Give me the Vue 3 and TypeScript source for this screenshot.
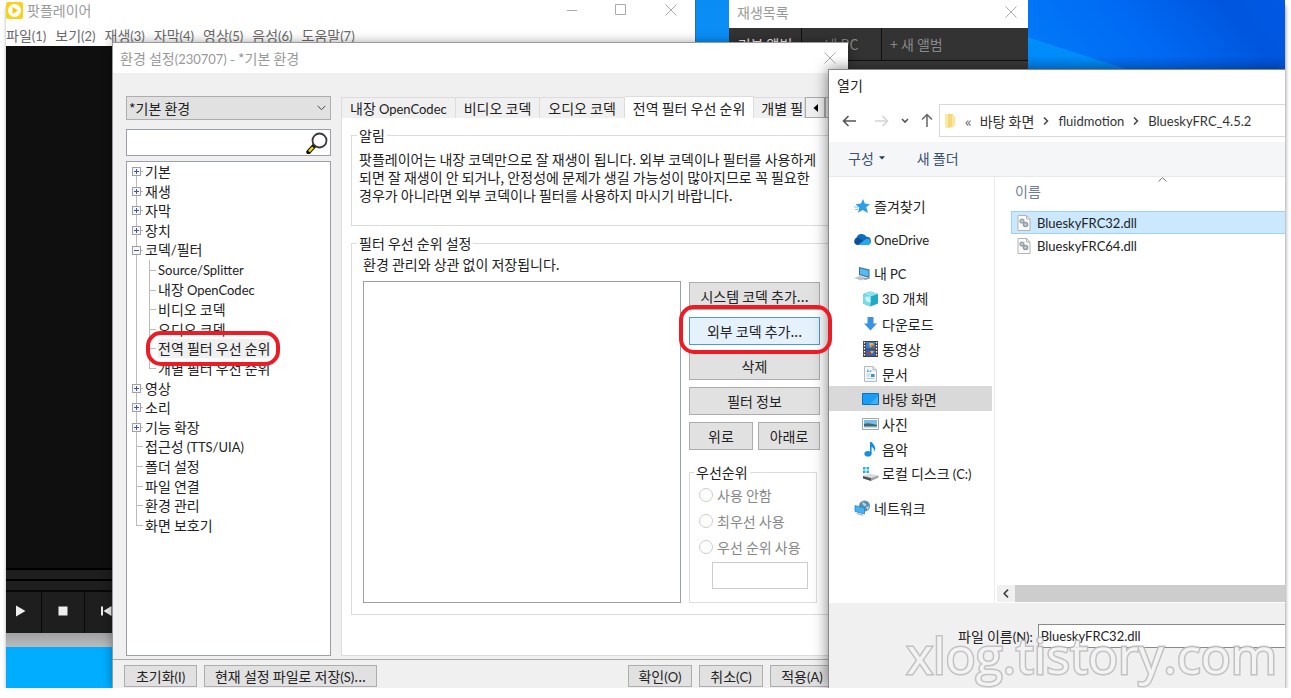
<script setup lang="ts">
import { h, ref } from 'vue'

interface TreeRow {
  label: string
  level: 1 | 2
  toggle?: 'plus' | 'minus'
  first?: boolean
  last?: boolean
  selected?: boolean
}

interface Place {
  label: string
  icon: string
  nested?: boolean
  gap?: boolean
  active?: boolean
}

// Sets Latin runs in their own face beside the Korean text.
const Mixed = (props: { t: string }) =>
  h(
    'span',
    props.t
      .split(/([A-Za-z0-9()/_.:]+)/)
      .filter(Boolean)
      .map((part) => (/^[A-Za-z0-9()/_.:]/.test(part) ? h('span', { class: 'latin' }, part) : part)),
  )
Mixed.props = ['t']

const menus = ['파일(1)', '보기(2)', '재생(3)', '자막(4)', '영상(5)', '음성(6)', '도움말(7)']

const tree: TreeRow[] = [
  { label: '기본', level: 1, toggle: 'plus', first: true },
  { label: '재생', level: 1, toggle: 'plus' },
  { label: '자막', level: 1, toggle: 'plus' },
  { label: '장치', level: 1, toggle: 'plus' },
  { label: '코덱/필터', level: 1, toggle: 'minus' },
  { label: 'Source/Splitter', level: 2 },
  { label: '내장 OpenCodec', level: 2 },
  { label: '비디오 코덱', level: 2 },
  { label: '오디오 코덱', level: 2 },
  { label: '전역 필터 우선 순위', level: 2, selected: true },
  { label: '개별 필터 우선 순위', level: 2, last: true },
  { label: '영상', level: 1, toggle: 'plus' },
  { label: '소리', level: 1, toggle: 'plus' },
  { label: '기능 확장', level: 1, toggle: 'plus' },
  { label: '접근성 (TTS/UIA)', level: 1 },
  { label: '폴더 설정', level: 1 },
  { label: '파일 연결', level: 1 },
  { label: '환경 관리', level: 1 },
  { label: '화면 보호기', level: 1, last: true },
]

const tabs = ['내장 OpenCodec', '비디오 코덱', '오디오 코덱', '전역 필터 우선 순위', '개별 필']
const activeTab = ref(3)

const priorities = ['사용 안함', '최우선 사용', '우선 순위 사용']

const places: Place[] = [
  { label: '즐겨찾기', icon: 'star' },
  { label: 'OneDrive', icon: 'cloud', gap: true },
  { label: '내 PC', icon: 'pc', gap: true },
  { label: '3D 개체', icon: 'cube', nested: true },
  { label: '다운로드', icon: 'down', nested: true },
  { label: '동영상', icon: 'film', nested: true },
  { label: '문서', icon: 'doc', nested: true },
  { label: '바탕 화면', icon: 'desk', nested: true, active: true },
  { label: '사진', icon: 'photo', nested: true },
  { label: '음악', icon: 'note', nested: true },
  { label: '로컬 디스크 (C:)', icon: 'disk', nested: true },
  { label: '네트워크', icon: 'net', gap: true },
]

const files = ['BlueskyFRC32.dll', 'BlueskyFRC64.dll']
const selectedFile = ref(0)
const fileName = ref('BlueskyFRC32.dll')
const profile = ref('*기본 환경')
const query = ref('')
</script>

<template>
  <main class="desktop">
    <section class="win player">
      <header class="player-title">
        <svg class="logo" width="17" height="17" viewBox="0 0 17 17">
          <rect width="17" height="17" rx="2" fill="#f8d31c" />
          <circle cx="8.5" cy="8.5" r="6.500" fill="#fff" />
          <path d="M6.500 5 12 8.500 6.500 12z" fill="#f3c812" />
        </svg>
        <span class="grow">팟플레이어</span>
        <button class="cap" aria-label="최소화"><svg width="12" height="12" viewBox="0 0 12 12"><path d="M1 6.5H11" /></svg></button>
        <button class="cap" aria-label="최대화"><svg width="12" height="12" viewBox="0 0 12 12"><path d="M.5 .5H10.500V10.500H.5z" /></svg></button>
        <button class="cap" aria-label="닫기"><svg width="12" height="12" viewBox="0 0 12 12"><path d="M.5 .5 11.500 11.500M11.500 .5 .5 11.500" /></svg></button>
      </header>
      <nav class="menu">
        <button v-for="m in menus" :key="m"><Mixed :t="m" /></button>
      </nav>
      <div class="video"></div>
      <div class="seek"></div>
      <div class="seek"></div>
      <div class="controls">
        <button aria-label="재생"><svg width="12" height="12" viewBox="0 0 12 12"><path d="M1 .5 10.500 6 1 11.500z" fill="#eee" /></svg></button>
        <button aria-label="정지"><svg width="12" height="12" viewBox="0 0 12 12"><rect x="1.500" y="1.500" width="9" height="9" fill="#eee" /></svg></button>
        <button aria-label="이전"><svg width="12" height="12" viewBox="0 0 12 12"><path d="M1 1.500H3V10.500H1zM11.500 1V11L3.500 6z" fill="#eee" /></svg></button>
      </div>
      <div class="base"></div>
    </section>

    <section class="win playlist">
      <header class="list-title">
        <span class="grow">재생목록</span>
        <button class="cap" aria-label="닫기"><svg width="12" height="12" viewBox="0 0 12 12"><path d="M.5 .5 11.500 11.500M11.500 .5 .5 11.500" /></svg></button>
      </header>
      <div class="albums">
        <button class="on">기본 앨범</button>
        <button>내 PC</button>
        <button class="new">+ 새 앨범</button>
      </div>
    </section>

    <section class="win settings">
      <header class="set-title">
        <span class="grow"><Mixed t="환경 설정(230707) - *기본 환경" /></span>
        <button class="cap" aria-label="닫기"><svg width="12" height="12" viewBox="0 0 12 12"><path d="M.5 .5 11.500 11.500M11.500 .5 .5 11.500" /></svg></button>
      </header>
      <div class="set-body">
        <div class="side">
          <div class="combo">
            <select v-model="profile" aria-label="환경">
              <option>*기본 환경</option>
            </select>
            <svg width="9" height="6" viewBox="0 0 9 6"><path d="M.7.9 4.500 4.700 8.300.9" fill="none" stroke="#444" /></svg>
          </div>
          <div class="search">
            <input v-model="query" type="text" aria-label="검색" />
            <svg width="22" height="22" viewBox="0 0 22 22">
              <path d="M8 14 2.500 20" stroke="#111" stroke-width="4.500" stroke-linecap="round" />
              <path d="M7 15.200 3 19.500" stroke="#f3e000" stroke-width="2.400" />
              <circle cx="13.500" cy="8.500" r="7" fill="#fff" stroke="#3a3a3a" stroke-width="1.800" />
            </svg>
          </div>
          <div class="tree">
            <ul>
              <li v-for="row in tree" :key="row.label">
                <span v-if="row.level === 2" class="stem through"></span>
                <span class="stem branch" :class="{ first: row.first, last: row.last }">
                  <button v-if="row.toggle" class="toggle" :aria-label="row.label">
                    <svg width="9" height="9" viewBox="0 0 9 9">
                      <rect x=".5" y=".5" width="8" height="8" fill="#f6f6f6" stroke="#a0a0a0" />
                      <path d="M2 4.500H7" stroke="#3c5a9c" />
                      <path v-if="row.toggle === 'plus'" d="M4.500 2V7" stroke="#3c5a9c" />
                    </svg>
                  </button>
                </span>
                <span class="leaf" :class="{ sel: row.selected }"><Mixed :t="row.label" /></span>
              </li>
            </ul>
          </div>
        </div>

        <div class="pane">
          <div class="tabs">
            <button v-for="(t, i) in tabs" :key="t" :class="{ on: i === activeTab }" @click="activeTab = i"><Mixed :t="t" /></button>
            <button class="arrow" aria-label="이전 탭"><svg width="5" height="8" viewBox="0 0 5 8"><path d="M5 0V8L.5 4z" fill="#000" /></svg></button>
            <button class="arrow" aria-label="다음 탭"><svg width="5" height="8" viewBox="0 0 5 8"><path d="M0 0V8L4.500 4z" fill="#000" /></svg></button>
          </div>
          <div class="page">
            <fieldset class="notice">
              <legend>알림</legend>
              <p>팟플레이어는 내장 코덱만으로 잘 재생이 됩니다. 외부 코덱이나 필터를 사용하게<br />되면 잘 재생이 안 되거나, 안정성에 문제가 생길 가능성이 많아지므로 꼭 필요한<br />경우가 아니라면 외부 코덱이나 필터를 사용하지 마시기 바랍니다.</p>
            </fieldset>
            <fieldset class="order">
              <legend>필터 우선 순위 설정</legend>
              <div class="order-in">
                <p>환경 관리와 상관 없이 저장됩니다.</p>
                <div class="cols">
                  <div class="listbox"></div>
                  <div class="acts">
                    <button class="btn">시스템 코덱 추가...</button>
                    <button class="btn hot">외부 코덱 추가...</button>
                    <button class="btn">삭제</button>
                    <button class="btn">필터 정보</button>
                    <div class="pair">
                      <button class="btn">위로</button>
                      <button class="btn">아래로</button>
                    </div>
                    <fieldset class="prio">
                      <legend>우선순위</legend>
                      <label v-for="p in priorities" :key="p"><input type="radio" name="prio" disabled />{{ p }}</label>
                      <input class="num" type="text" aria-label="우선 순위" disabled />
                    </fieldset>
                  </div>
                </div>
              </div>
            </fieldset>
          </div>
        </div>
      </div>
      <footer class="set-foot">
        <button class="btn reset"><Mixed t="초기화(I)" /></button>
        <button class="btn save">현재 설정 파일로 저장<span class="latin">(S)</span>...</button>
        <span class="grow"></span>
        <button class="btn"><Mixed t="확인(O)" /></button>
        <button class="btn"><Mixed t="취소(C)" /></button>
        <button class="btn"><Mixed t="적용(A)" /></button>
      </footer>
    </section>

    <section class="win open">
      <header class="open-title">열기</header>
      <div class="nav">
        <button aria-label="뒤로"><svg width="15" height="12" viewBox="0 0 15 12"><path d="M14 6H1.500M6.500 1 1.500 6 6.500 11" fill="none" stroke="#555" stroke-width="1.600" /></svg></button>
        <button aria-label="앞으로"><svg width="15" height="12" viewBox="0 0 15 12"><path d="M1 6H13.500M8.500 1 13.500 6 8.500 11" fill="none" stroke="#d4d4d4" stroke-width="1.600" /></svg></button>
        <button aria-label="최근 위치"><svg width="8" height="6" viewBox="0 0 8 6"><path d="M1 1 4 4 7 1" fill="none" stroke="#555" stroke-width="1.600" /></svg></button>
        <button aria-label="위로"><svg width="12" height="15" viewBox="0 0 12 15"><path d="M6 14V1.500M1 6.500 6 1.500 11 6.500" fill="none" stroke="#666" stroke-width="1.500" /></svg></button>
        <div class="address">
          <svg width="11" height="16" viewBox="0 0 11 16"><path d="M0 1H8V14L3 15 0 14z" fill="#f7d777" /><path d="M7 3H10V13H7z" fill="#fbe6a2" /><path d="M0 1H3V15L0 14z" fill="#fce9a9" /></svg>
          <span class="more">«</span>
          <a href="#">바탕 화면</a>
          <svg class="sep" width="6" height="8" viewBox="0 0 6 8"><path d="M1 .5 4.500 4 1 7.500" fill="none" stroke="#444" stroke-width="1.500" /></svg>
          <a href="#"><Mixed t="fluidmotion" /></a>
          <svg class="sep" width="6" height="8" viewBox="0 0 6 8"><path d="M1 .5 4.500 4 1 7.500" fill="none" stroke="#444" stroke-width="1.500" /></svg>
          <a href="#"><Mixed t="BlueskyFRC_4.5.2" /></a>
        </div>
      </div>
      <div class="tools">
        <button>구성<svg width="6" height="4" viewBox="0 0 6 4"><path d="M0 .3H6L3 3.500z" fill="#1e395b" /></svg></button>
        <button>새 폴더</button>
      </div>
      <div class="open-body">
        <ul class="places">
          <li v-for="p in places" :key="p.label" :class="{ nested: p.nested, gap: p.gap, active: p.active }">
            <svg width="17" height="16" viewBox="0 0 17 16">
              <template v-if="p.icon === 'star'">
                <path d="M9 1 11 5.700 16 5.900 12.300 9.200 14 15 8.700 12 4 14.800 5.200 9.500 1.500 6.200 7 5.600z" fill="#2c9fe8" />
                <path d="M0 9H4M1 11.500H4" stroke="#7cc4f2" />
              </template>
              <template v-else-if="p.icon === 'cloud'">
                <path d="M4 13A4 4 0 0 1 2.500 5.800 5.500 5.500 0 0 1 12.500 4.800 4.200 4.200 0 0 1 14 13z" fill="#0f6cbd" />
                <path d="M4 13C7 10.500 10 8 13.500 6.500 18 7.500 17.500 13 13.500 13z" fill="#28a8ea" />
                <path d="M2 6C4.500 5 6 6 9 9L3.500 13C-.5 12-.5 8 2 6z" fill="#0b4f9f" />
              </template>
              <template v-else-if="p.icon === 'pc'">
                <path d="M5 1 15.500 3.500V12L5 9z" fill="#3e6c93" />
                <path d="M6 2.300 14.500 4.400V10.500L6 8.200z" fill="#54bbf5" />
                <path d="M0 12 6 10 13 12 7 14.500z" fill="#b9c4cc" />
                <path d="M9 12.500 15 11.500 16 12.500 11 14z" fill="#8c9aa5" />
              </template>
              <template v-else-if="p.icon === 'cube'">
                <path d="M1 3 8.500 .5 16 3V12.500L8.500 15.500 1 12.500z" fill="#1fa9c4" />
                <path d="M1 3 8.500 .5 16 3 8.500 5.500z" fill="#8fe3ef" />
                <path d="M1 3 8.500 5.500V15.500L1 12.500z" fill="#7dd8e6" />
                <path d="M3 6 8.500 5.500V12L4 10z" fill="#c7f2f7" />
              </template>
              <path v-else-if="p.icon === 'down'" d="M5.500 1H11.500V7.500H15L8.500 14.500 2 7.500H5.500z" fill="#3a92e4" />
              <template v-else-if="p.icon === 'film'">
                <path d="M1 0H16V16H1z" fill="#3f4347" />
                <path d="M4 1H13V7.500H4z" fill="#3b7ddd" />
                <path d="M4 8.500H13V15H4z" fill="#2c62bd" />
                <path d="M7 2H11L12 6H8zM8 10H12L10 13z" fill="#e9bd24" />
                <path d="M9 4 13 5 10 7zM4 12 8 10 9 14z" fill="#b84432" />
                <path d="M2.500 1V15M14.500 1V15" stroke="#fff" stroke-width="1.300" stroke-dasharray="1.500 1.500" />
              </template>
              <template v-else-if="p.icon === 'doc'">
                <path d="M2.500 .5H11L14.500 4V15.500H2.500z" fill="#f4f6f8" stroke="#b3bac0" />
                <path d="M11 .5V4H14.500" fill="none" stroke="#b3bac0" />
                <path d="M4.500 6 6 2.500 7 6 9 3.500 9.500 6z" fill="#5fb4e6" />
                <path d="M4.500 8H8M4.500 10H8M4.500 12.500H12.500" stroke="#a9cfe6" />
                <path d="M9 8H12.500V11H9z" fill="#3b8fc9" />
              </template>
              <template v-else-if="p.icon === 'desk'">
                <path d="M.5 2.500H16.500V13.500H.5z" fill="#1c9cf5" stroke="#0874bf" />
                <path d="M8 13 16 5V13z" fill="#44b0fa" />
              </template>
              <template v-else-if="p.icon === 'photo'">
                <path d="M.5 2.500H16.500V13.500H.5z" fill="#fff" stroke="#9fa8ae" />
                <path d="M2 4H15V9H2z" fill="#79bdf0" />
                <path d="M2 8C6 6.500 9 8 15 9V12H2z" fill="#3f6b62" />
                <path d="M2 10.500H15V12H2z" fill="#c4dcea" />
              </template>
              <template v-else-if="p.icon === 'note'">
                <ellipse cx="6" cy="12.700" rx="3.600" ry="2.800" fill="#168ee5" />
                <path d="M8 1V12.500H9.600V6C12 7 12.500 8.500 11.500 11 15 8 13 5 9.600 1z" fill="#168ee5" />
              </template>
              <template v-else-if="p.icon === 'disk'">
                <path d="M1 1H3.500V3.500H1zM4.500 1H7V3.500H4.500zM1 4.500H3.500V7H1zM4.500 4.500H7V7H4.500z" fill="#20b3e8" />
                <path d="M1 10 7 7.500 16.500 9.500 9 12z" fill="#d9dbdc" />
                <path d="M1 10 9 12V15L1 12.500z" fill="#4c5256" />
                <path d="M9 12 16.500 9.500V11.500L9 15z" fill="#9ba1a4" />
              </template>
              <template v-else>
                <circle cx="10.500" cy="6" r="5.500" fill="#5b8fb0" />
                <path d="M8 1.500C10 3 11 3 12.500 5 11 7 9 6 8 1.500zM12 7 15.500 6 13.500 10z" fill="#b5dbe9" />
                <path d="M1 5.500 10.500 8V14L1 11.500z" fill="#43b3f3" stroke="#2b7db5" stroke-width=".7" />
                <path d="M3 13.500 9 15.300" stroke="#8ba0ad" />
              </template>
            </svg>
            <Mixed :t="p.label" />
          </li>
        </ul>
        <div class="files">
          <div class="caret"><svg width="9" height="5" viewBox="0 0 9 5"><path d="M.5 4.500 4.500 .7 8.500 4.500" fill="none" stroke="#777" /></svg></div>
          <div class="head">이름</div>
          <ul>
            <li v-for="(f, i) in files" :key="f" :class="{ sel: i === selectedFile }" @click="selectedFile = i">
              <svg width="14" height="16" viewBox="0 0 14 16">
                <path d="M1 .5H9.500L13 4V15.500H1z" fill="#fafafa" stroke="#b4b4b4" />
                <path d="M9.500 .5V4H13" fill="none" stroke="#b4b4b4" />
                <circle cx="5" cy="6" r="1.800" fill="#cfd6da" stroke="#9aa6ad" stroke-width="1.600" />
                <circle cx="8.500" cy="9.500" r="2" fill="#cfd6da" stroke="#8f9ba3" stroke-width="1.600" />
              </svg>
              <Mixed :t="f" />
            </li>
          </ul>
          <div class="scroll">
            <button aria-label="왼쪽으로"><svg width="6" height="9" viewBox="0 0 6 9"><path d="M5 .7 1.200 4.500 5 8.300" fill="none" stroke="#444" stroke-width="1.700" /></svg></button>
            <div class="thumb"></div>
          </div>
        </div>
      </div>
      <footer class="open-foot">
        <label for="fname"><Mixed t="파일 이름(N):" /></label>
        <input id="fname" v-model="fileName" class="latin" type="text" />
      </footer>
    </section>

    <div class="ring ring-tree"></div>
    <div class="ring ring-btn"></div>
    <div class="mark">xlog.tistory.com</div>
  </main>
</template>

<style>
body {
  margin: 0;
  background: #fff;
}
.desktop .latin {
  font-family: Lato, "Noto Sans CJK KR", sans-serif;
  font-size: 13px;
}
</style>

<style scoped>
* {
  box-sizing: border-box;
}
.desktop {
  position: relative;
  height: calc(100vh - 10px);
  min-height: 600px;
  margin: 0 6px;
  overflow: clip;
  overflow-clip-margin: 12px;
  font: 14px/20px "Noto Sans CJK KR", "Noto Sans", sans-serif;
  color: #222;
  background:
    linear-gradient(to bottom left, transparent 50%, rgba(0, 170, 255, 0.45) 51%, rgba(0, 160, 255, 0.3)) right 155px top 37px / 102px 33px no-repeat,
    linear-gradient(50deg, #007cf8, #006af4 45%, #0056de 80%, #0058e4) right top / 257px 70px no-repeat,
    linear-gradient(#0a8cf5, #00aeff);
  box-shadow: 0 5px 5px -2px rgba(0, 0, 0, 0.7), 2px 4px 4px -1px rgba(0, 0, 0, 0.2);
}
button,
input,
select {
  font: inherit;
  color: inherit;
  margin: 0;
  padding: 0;
  border: 0;
  background: none;
  border-radius: 0;
  white-space: nowrap;
}
ul {
  list-style: none;
  margin: 0;
  padding: 0;
}
p {
  margin: 0;
}
svg {
  display: block;
  flex: none;
}
.grow {
  flex: 1;
}
.win {
  position: absolute;
  display: flex;
  flex-direction: column;
  overflow: hidden;
}
.cap svg {
  fill: none;
  stroke: #aaa;
}

/* player */
.player {
  left: 0;
  top: 0;
  bottom: 41px;
  width: 690px;
  background: #fff;
  border-right: 1px solid #2f6ea8;
}
.player-title {
  display: flex;
  align-items: center;
  height: 20px;
  color: #999;
  gap: 4px;
  padding-right: 12px;
}
.player-title .cap {
  width: 45px;
  display: grid;
  place-items: center;
}
.player-title .cap:last-child {
  width: 24px;
  margin-left: 12px;
}
.menu {
  display: flex;
  gap: 9px;
  height: 26px;
  padding-top: 5px;
  color: #6a6a6a;
}
.menu button {
  height: 20px;
}
.video {
  flex: 1;
  background: #0f0f0f;
}
.seek {
  height: 11px;
  border-top: 2px solid #000;
  background: #1e1e1e;
}
.controls {
  display: flex;
  height: 43px;
  background: #1e1e1e;
  border-top: 2px solid #080808;
}
.controls button {
  width: 43px;
  padding-bottom: 3px;
  display: grid;
  place-items: center;
  border-right: 1px solid #080808;
}
.controls button:first-child {
  width: 36px;
  padding-right: 6px;
}
.base {
  height: 14px;
  background: linear-gradient(#9fa2a2, #b9bcbc);
}

/* playlist */
.playlist {
  left: 723px;
  top: 0;
  bottom: 200px;
  width: 299px;
  background: #3a3a3a;
}
.list-title {
  display: flex;
  align-items: center;
  height: 28px;
  flex: none;
  padding: 0 11px 4px 8px;
  background: #fff;
  color: #999;
}
.albums {
  display: flex;
  height: 33px;
  background: #333;
  border-bottom: 1px solid #111;
  color: #888;
}
.albums button {
  width: 80px;
  border-right: 1px solid #111;
}
.albums .on {
  width: 73px;
  color: #eee;
}
.albums .new {
  width: auto;
  border: 0;
  padding-left: 8px;
}

/* settings */
.settings {
  left: 106px;
  top: 42px;
  bottom: 0;
  width: 736px;
  background: #f0f0f0;
  border-left: 1px solid #999;
  border-top: 1px solid #999;
  box-shadow: 0 0 10px rgba(0, 0, 0, 0.35);
}
.set-title {
  display: flex;
  align-items: center;
  flex: none;
  height: 30px;
  padding: 0 12px 0 7px;
  background: #fff;
  color: #999;
}
.set-body {
  flex: 1;
  min-height: 0;
  display: flex;
  gap: 10px;
  padding: 23px 8px 3px 13px;
}
.side {
  flex: none;
  width: 205px;
  display: flex;
  flex-direction: column;
}
.combo,
.search {
  display: grid;
  align-items: center;
}
.combo > *,
.search > * {
  grid-area: 1 / 1;
}
.combo svg,
.search svg {
  justify-self: end;
  pointer-events: none;
  margin-right: 5px;
}
.combo select {
  appearance: none;
  height: 24px;
  padding-left: 2px;
  background: #e1e1e1;
  border: 1px solid #adadad;
}
.search {
  margin: 9px 0 5px;
}
.search input {
  width: 100%;
  height: 27px;
  background: #fff;
  border: 1px solid #9a9ea6;
}
.search svg {
  margin-right: 3px;
}
.tree {
  flex: 1;
  background: #fff;
  border: 1px solid #9a9ea6;
  padding-left: 5px;
}
.tree ul {
  display: grid;
  grid-auto-rows: 1fr;
  height: 373px;
}
.tree li {
  display: flex;
  align-items: center;
}
.stem {
  align-self: stretch;
  width: 13px;
  flex: none;
  display: flex;
  align-items: center;
}
.through {
  background: linear-gradient(#bbb, #bbb) 4px 0 / 1px 100% no-repeat;
}
.branch {
  background:
    linear-gradient(#bbb, #bbb) 4px 0 / 1px 100% no-repeat,
    linear-gradient(#bbb, #bbb) 4px 50% / 7px 1px no-repeat;
}
.branch.first {
  background:
    linear-gradient(#bbb, #bbb) 4px 100% / 1px 50% no-repeat,
    linear-gradient(#bbb, #bbb) 4px 50% / 7px 1px no-repeat;
}
.branch.last {
  background:
    linear-gradient(#bbb, #bbb) 4px 0 / 1px 50% no-repeat,
    linear-gradient(#bbb, #bbb) 4px 50% / 7px 1px no-repeat;
}
.leaf {
  line-height: 19px;
  white-space: nowrap;
}
.leaf.sel {
  background: #f0f0f0;
}
.pane {
  flex: 1;
  min-width: 0;
  display: flex;
  flex-direction: column;
}
.tabs {
  display: flex;
  align-items: flex-end;
  height: 22px;
  overflow: hidden;
}
.tabs button {
  flex: none;
  height: 21px;
  padding: 0 8px;
  border: 1px solid #dcdcdc;
  border-left: 0;
  border-bottom: 0;
  line-height: 20px;
}
.tabs button:first-child {
  border-left: 1px solid #dcdcdc;
}
.tabs .on {
  height: 22px;
  background: #fff;
}
.tabs button:nth-child(5) {
  padding: 0 1px 0 7px;
}
.tabs .arrow {
  width: 20px;
  padding: 0;
  display: grid;
  place-items: center;
  border: 1px solid #aaa;
}
.page {
  flex: 1;
  min-height: 0;
  display: flex;
  flex-direction: column;
  gap: 7px;
  padding: 7px 6px 40px 9px;
  background: #fff;
  border-left: 1px solid #dcdcdc;
  border-bottom: 1px solid #dcdcdc;
}
fieldset {
  min-width: 0;
  margin: 0;
  border: 1px solid #dcdcdc;
}
legend {
  padding: 0 2px;
  line-height: 20px;
}
.notice {
  padding: 5px 0 21px 5px;
}
.notice p {
  line-height: 18px;
  padding-left: 2px;
  white-space: nowrap;
}
.order {
  flex: 1;
  padding: 2px 9px 11px 5px;
}
.order-in {
  height: 100%;
  padding-left: 6px;
  display: flex;
  flex-direction: column;
  gap: 8px;
}
.order p {
  line-height: 18px;
}
.cols {
  flex: 1;
  display: flex;
  gap: 8px;
}
.listbox {
  width: 318px;
  border: 1px solid #9a9ea6;
  background: #fff;
}
.acts {
  width: 131px;
  padding-top: 1px;
  display: flex;
  flex-direction: column;
  gap: 7px;
}
.btn {
  height: 28px;
  background: #e1e1e1;
  border: 1px solid #adadad;
}
.btn.hot {
  background: #e5f1fb;
  border-color: #4a9bdc;
}
.pair {
  display: grid;
  grid-template-columns: 64px 62px;
  gap: 5px;
}
.prio {
  flex: 1;
  margin: 5px 3px 0 0;
  padding: 0 8px 11px 9px;
  display: flex;
  flex-direction: column;
  color: #888;
}
.prio legend {
  margin-left: -5px;
  color: #222;
}
.prio label {
  display: flex;
  align-items: center;
  gap: 4px;
  height: 26px;
}
.prio input[type='radio'] {
  appearance: none;
  width: 14px;
  height: 14px;
  border: 1px solid #ccc;
  border-radius: 50%;
  background: #fff;
}
.num {
  height: 27px;
  margin: 2px 0 0 13px;
  background: #fff;
  border: 1px solid #ccc;
}
.set-foot {
  display: flex;
  align-items: center;
  gap: 7px;
  height: 29px;
  flex: none;
  padding: 4px 14px 0 11px;
  border-top: 1px solid #aaa;
}
.set-foot .btn {
  height: 22px;
  width: 64px;
  line-height: 20px;
}
.set-foot .reset {
  width: 73px;
}
.set-foot .save {
  width: 173px;
}

/* file dialog */
.open {
  left: 822px;
  top: 69px;
  right: 0;
  bottom: 0;
  background: #fff;
  border-left: 1px solid #888;
  border-top: 1px solid #888;
  clip-path: inset(-12px 0 0 -20px);
  box-shadow: 0 0 14px rgba(0, 0, 0, 0.5);
}
.open-title {
  height: 34px;
  flex: none;
  padding: 5px 8px 0;
}
.nav {
  display: flex;
  align-items: center;
  flex: none;
  height: 33px;
  padding-left: 13px;
}
.nav button {
  display: grid;
  place-items: center;
  margin-right: 12px;
}
.nav button:first-child {
  margin-right: 17px;
}
.address {
  flex: 1;
  align-self: stretch;
  margin-left: -6px;
  display: flex;
  align-items: center;
  padding-left: 5px;
  border: 1px solid #d9d9d9;
  border-right: 0;
  white-space: nowrap;
  overflow: hidden;
}
.address a {
  color: #333;
  text-decoration: none;
}
.more {
  margin: 0 8px 0 9px;
  color: #555;
}
.sep {
  margin: 0 9px;
}
.tools {
  display: flex;
  align-items: center;
  flex: none;
  gap: 32px;
  height: 35px;
  margin-top: 5px;
  padding: 0 0 2px 19px;
  background: #f5f6f7;
  border-bottom: 1px solid #e6e8ea;
  color: #3b5170;
}
.tools button {
  display: flex;
  align-items: center;
  gap: 5px;
}
.open-body {
  flex: 1;
  min-height: 0;
  display: flex;
}
.places {
  flex: none;
  width: 166px;
  padding-top: 16px;
  border-right: 1px solid #ececec;
}
.places li {
  display: flex;
  align-items: center;
  gap: 3px;
  height: 25px;
  margin-right: 2px;
  padding-left: 25px;
  white-space: nowrap;
}
.places .nested {
  padding-left: 33px;
}
.places .gap {
  margin-top: 9px;
}
.places .active {
  background: #d9d9d9;
}
.files {
  flex: 1;
  min-width: 0;
  display: flex;
  flex-direction: column;
  padding-left: 2px;
}
.caret {
  padding-left: 161px;
}
.head {
  height: 29px;
  padding-left: 18px;
  line-height: 18px;
  color: #6d7f96;
}
.files ul {
  flex: 1;
  padding-left: 14px;
}
.files li {
  display: flex;
  align-items: center;
  gap: 6px;
  height: 23px;
  padding-left: 5px;
  border: 1px solid transparent;
}
.files .sel {
  background: #cce8ff;
  border-color: #99d1ff;
  border-right: 0;
}
.scroll {
  display: flex;
  height: 17px;
  margin-bottom: 1px;
  background: #f0f0f0;
}
.scroll button {
  width: 18px;
  display: grid;
  place-items: center;
}
.thumb {
  flex: 1;
  background: #cdcdcd;
}
.open-foot {
  flex: none;
  display: flex;
  align-items: flex-start;
  height: 85px;
  padding: 21px 0 0 129px;
  gap: 5px;
  background: #f0f0f0;
}
.open-foot label {
  line-height: 24px;
  white-space: nowrap;
}
.open-foot input {
  flex: 1;
  min-width: 0;
  height: 24px;
  padding-left: 2px;
  background: #fff;
  border: 1px solid #8a8a8a;
  border-right: 0;
}

/* annotations lying over the windows */
.ring {
  position: absolute;
  border: 4px solid #ed1c24;
  border-radius: 15px;
  pointer-events: none;
}
.ring-tree {
  left: 140px;
  top: 331px;
  width: 134px;
  height: 35px;
}
.ring-btn {
  left: 673px;
  top: 305px;
  width: 153px;
  height: 49px;
}
.mark {
  position: absolute;
  right: 8px;
  bottom: 3px;
  font: 50px/60px "Open Sans", sans-serif;
  color: #f4f4f4;
  -webkit-text-stroke: 3px #bababa;
  paint-order: stroke fill;
  opacity: 0.85;
  pointer-events: none;
}
</style>
